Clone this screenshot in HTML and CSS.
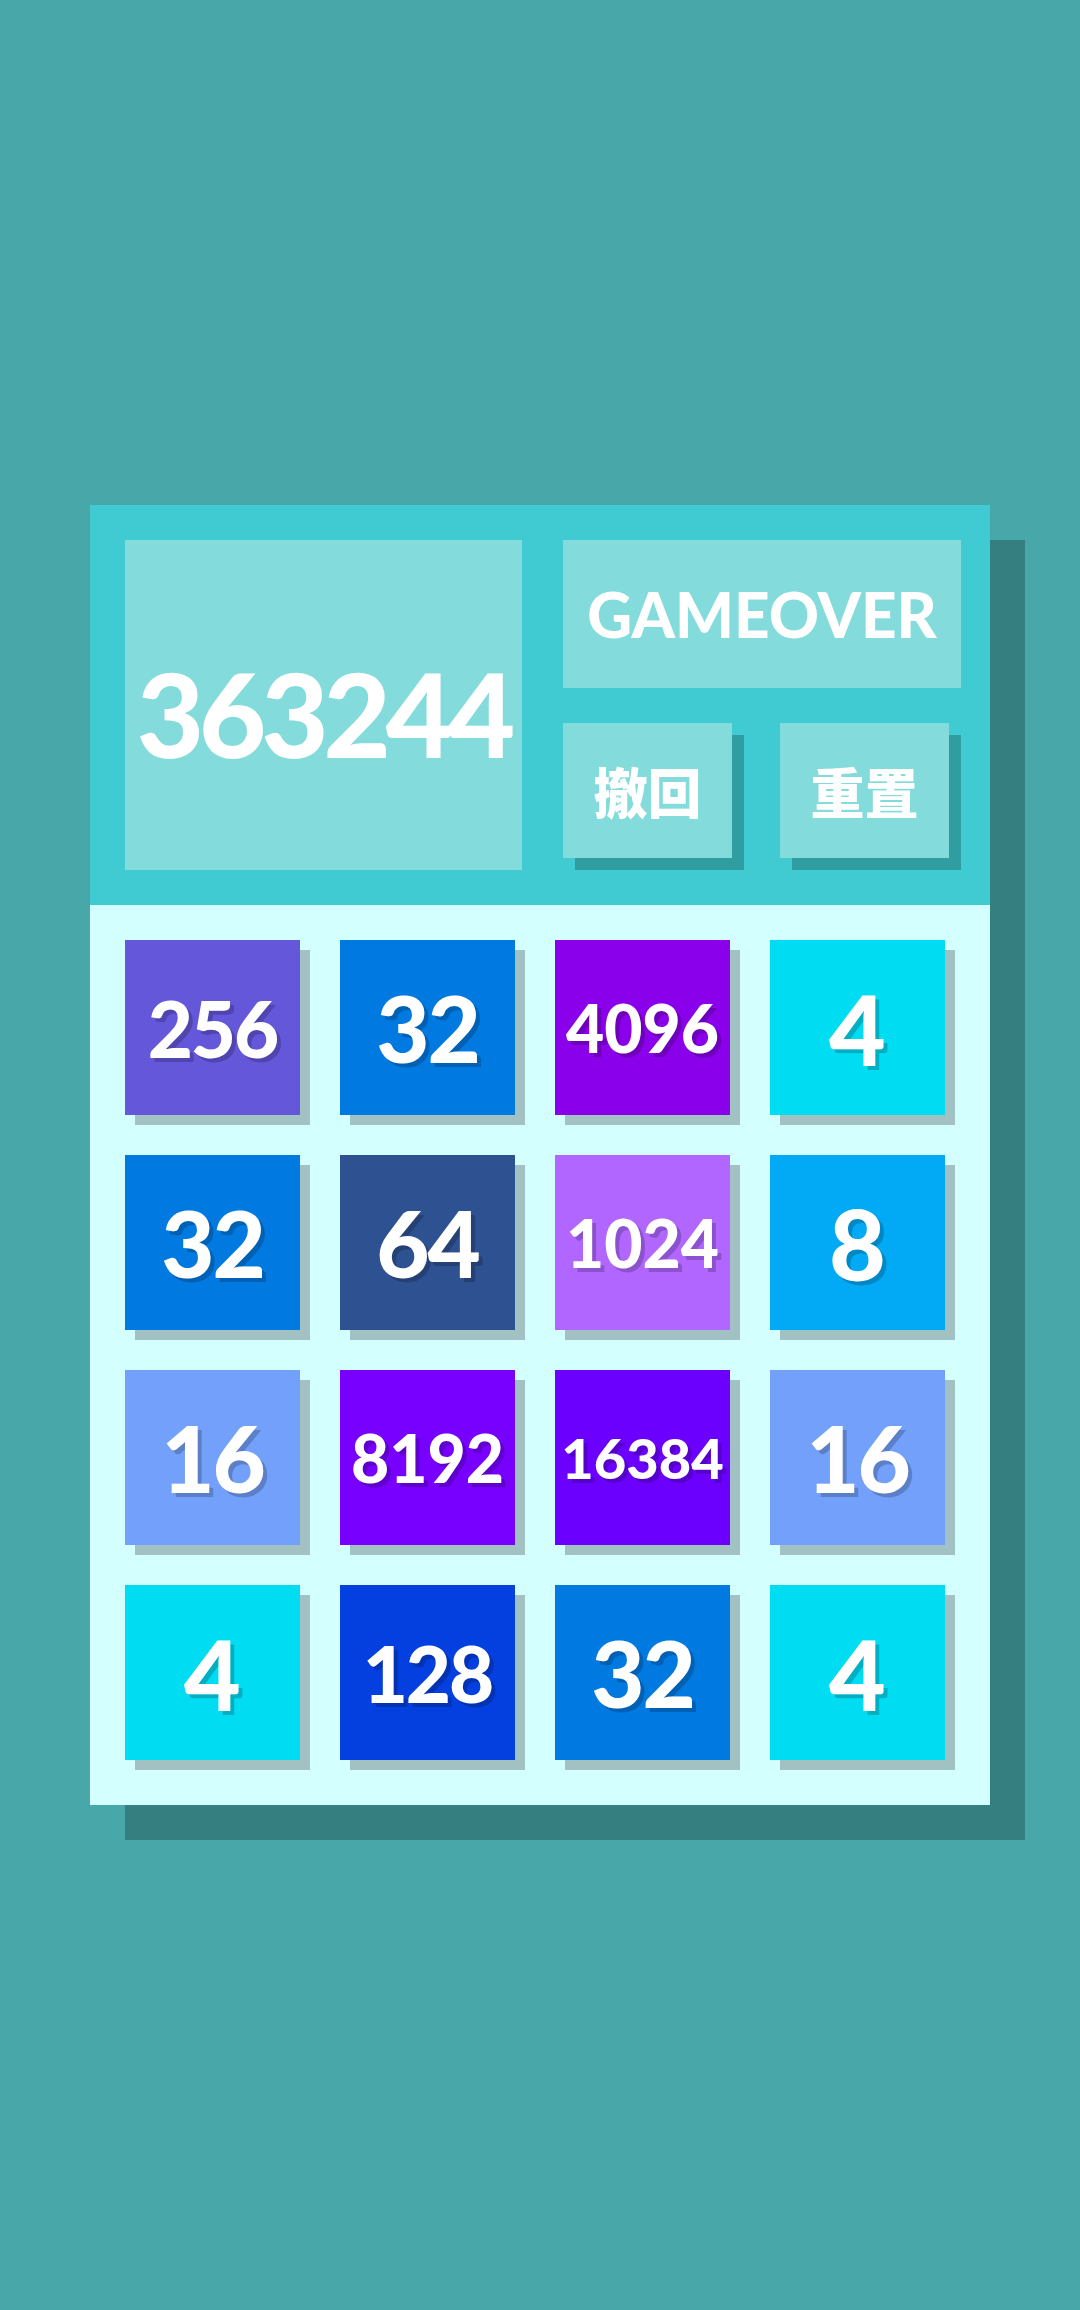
FILE: index.html
```html
<!DOCTYPE html>
<html lang="zh-Hant">
<head>
<meta charset="utf-8">
<title>2048</title>
<link rel="stylesheet" href="styles.css">
</head>
<body>
<main class="game">
  <header class="top">
    <div class="score">363244</div>
    <div class="side">
      <div class="status">GAMEOVER</div>
      <div class="actions">
        <button class="btn">撤回</button>
        <button class="btn">重置</button>
      </div>
    </div>
  </header>
  <section class="board">
    <div class="tile t256 d3">256</div>
    <div class="tile t32 d2">32</div>
    <div class="tile t4096 d4">4096</div>
    <div class="tile t4 d1">4</div>

    <div class="tile t32 d2">32</div>
    <div class="tile t64 d2">64</div>
    <div class="tile t1024 d4">1024</div>
    <div class="tile t8 d1">8</div>

    <div class="tile t16 d2">16</div>
    <div class="tile t8192 d4">8192</div>
    <div class="tile t16384 d5">16384</div>
    <div class="tile t16 d2">16</div>

    <div class="tile t4 d1">4</div>
    <div class="tile t128 d3">128</div>
    <div class="tile t32 d2">32</div>
    <div class="tile t4 d1">4</div>
  </section>
</main>
</body>
</html>
```

FILE: styles.css
```css
html, body {
  margin: 0;
  padding: 0;
}
body {
  background: #48a7a8;
  min-height: 2310px;
  padding-top: 505px;
  box-sizing: border-box;
  font-family: "Lato", "Noto Sans CJK TC", sans-serif;
}
.game {
  width: 900px;
  margin-left: 90px;
  box-shadow: 35px 35px 0 #367f80;
}
.top {
  height: 400px;
  box-sizing: border-box;
  background: #40cbd2;
  padding: 35px 0 0 35px;
  display: flex;
}
.score {
  width: 397px;
  height: 330px;
  background: #83dbdc;
  color: #fff;
  font-weight: 900;
  font-size: 116px;
  letter-spacing: -5px;
  display: flex;
  align-items: center;
  justify-content: center;
  padding-top: 16px;
  box-sizing: border-box;
}
.side {
  margin-left: 41px;
  width: 398px;
  display: flex;
  flex-direction: column;
}
.status {
  height: 148px;
  background: #83dbdc;
  color: #fff;
  font-weight: 900;
  font-size: 62px;
  letter-spacing: 0;
  display: flex;
  align-items: center;
  justify-content: center;
}
.actions {
  margin-top: 35px;
  display: flex;
  gap: 48px;
}
.btn {
  width: 169px;
  height: 135px;
  border: 0;
  padding: 0;
  background: #83dbdc;
  color: #fff;
  font-family: "Noto Sans CJK TC", "Noto Sans CJK SC", sans-serif;
  font-weight: 900;
  font-size: 54px;
  box-shadow: 12px 12px 0 #309da1;
}
.board {
  height: 900px;
  box-sizing: border-box;
  background: #d3fffe;
  padding: 35px 0 0 35px;
  display: grid;
  grid-template-columns: repeat(4, 175px);
  grid-auto-rows: 175px;
  gap: 40px;
  align-content: start;
}
.tile {
  display: flex;
  align-items: center;
  justify-content: center;
  color: #fff;
  font-weight: 900;
  box-shadow: 10px 10px 0 #a2c1c2;
  text-shadow: 4px 4px 0 rgba(0, 0, 0, 0.2);
}
.d1 { font-size: 98px; }
.d2 { font-size: 92px; letter-spacing: -2px; }
.d3 { font-size: 78px; letter-spacing: -2px; }
.d4 { font-size: 66px; letter-spacing: 0; }
.d5 { font-size: 56px; letter-spacing: 0; }

.t4 { background: #00ddf3; }
.t8 { background: #02a9f4; }
.t16 { background: #73a0fb; }
.t32 { background: #0079e0; }
.t64 { background: #2e5192; }
.t128 { background: #0440e0; }
.t256 { background: #6457da; }
.t1024 { background: #b066ff; }
.t4096 { background: #8a00ea; }
.t8192 { background: #7700ff; }
.t16384 { background: #6c00ff; }
```
